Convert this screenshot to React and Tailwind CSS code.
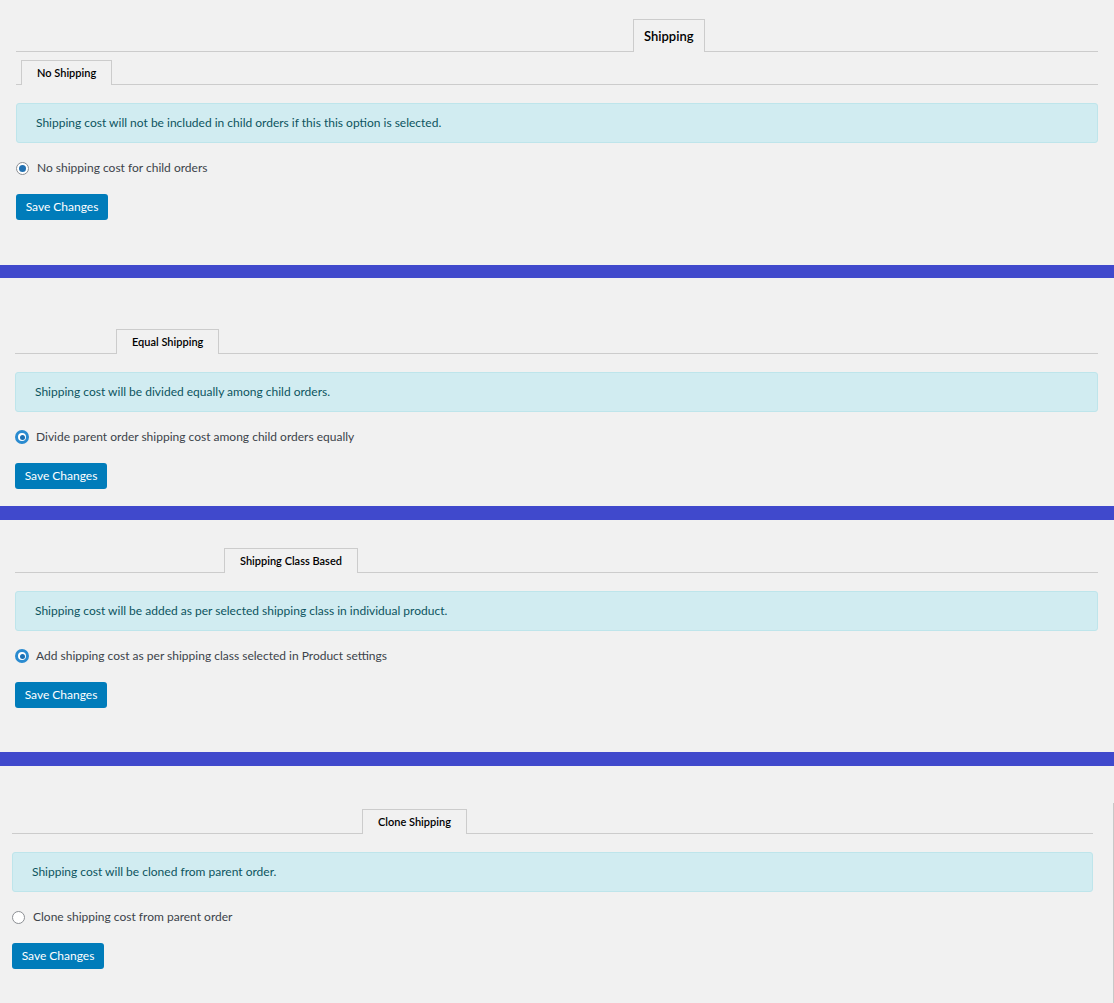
import React from "react";

function Radio({ variant }) {
  if (variant === "focus") {
    return (
      <span className="flex h-[14px] w-[14px] shrink-0 items-center justify-center rounded-full border-[3px] border-[#2a8bd0] bg-white">
        <span className="h-[5px] w-[5px] rounded-full bg-[#1a6fb3]" />
      </span>
    );
  }
  if (variant === "checked") {
    return (
      <span className="flex h-[13px] w-[13px] shrink-0 items-center justify-center rounded-full border border-[#8c8f94] bg-white">
        <span className="h-[7px] w-[7px] rounded-full bg-[#2271b1]" />
      </span>
    );
  }
  return <span className="h-[13px] w-[13px] shrink-0 rounded-full border border-[#8c8f94] bg-white" />;
}

function TabRow({ label, offset, big, top }) {
  return (
    <div className={`flex border-b border-[#ccc] ${top}`}>
      <div
        className={`${offset} -mb-px border border-b-0 border-[#ccc] bg-[#f1f1f1] text-black ${
          big ? "h-[33px] px-[10px] pt-[7px] text-[13px] font-semibold" : "h-[25px] px-[15px] pt-[4px] text-[11px] font-semibold"
        }`}
      >
        {label}
      </div>
    </div>
  );
}

function Body({ alert, radio, label, gap }) {
  return (
    <>
      <div className="mt-[18px] flex h-[40px] items-center rounded-[3px] border border-[#bee5eb] bg-[#d1ecf1] pl-[19px] text-[12px] text-[#0c5460]">
        {alert}
      </div>
      <div className={`mt-[16px] flex items-center ${gap} text-[12px] text-[#3c434a]`}>
        <Radio variant={radio} />
        <span>{label}</span>
      </div>
      <div className="mt-[16px]">
        <button className="h-[26px] w-[92px] rounded-[3px] bg-[#007cba] text-[12px] text-white">Save Changes</button>
      </div>
    </>
  );
}

function Bar({ h }) {
  return <div className={`${h} w-full bg-[#4049cc]`} />;
}

export default function App() {
  return (
    <div className="min-h-[1003px] w-[1114px] bg-[#f1f1f1]" style={{ fontFamily: '"Lato", "Noto Sans", sans-serif' }}>
      {/* Section 1 */}
      <div className="h-[265px] pl-[16px] pr-[16px] pt-[19px]">
        <TabRow label="Shipping" offset="ml-[617px]" big top="" />
        <TabRow label="No Shipping" offset="ml-[5px]" top="mt-[8px]" />
        <Body
          alert="Shipping cost will not be included in child orders if this this option is selected."
          radio="checked"
          label="No shipping cost for child orders"
          gap="gap-[8px]"
        />
      </div>
      <Bar h="h-[13px]" />
      {/* Section 2 */}
      <div className="h-[228px] pl-[15px] pr-[16px] pt-[51px]">
        <TabRow label="Equal Shipping" offset="ml-[101px]" top="" />
        <Body
          alert="Shipping cost will be divided equally among child orders."
          radio="focus"
          label="Divide parent order shipping cost among child orders equally"
          gap="gap-[7px]"
        />
      </div>
      <Bar h="h-[14px]" />
      {/* Section 3 */}
      <div className="h-[232px] pl-[15px] pr-[16px] pt-[28px]">
        <TabRow label="Shipping Class Based" offset="ml-[209px]" top="" />
        <Body
          alert="Shipping cost will be added as per selected shipping class in individual product."
          radio="focus"
          label="Add shipping cost as per shipping class selected in Product settings"
          gap="gap-[7px]"
        />
      </div>
      <Bar h="h-[14px]" />
      {/* Section 4 */}
      <div className="flex h-[237px]">
        <div className="flex-1 pl-[12px] pr-[20px] pt-[43px]">
          <TabRow label="Clone Shipping" offset="ml-[350px]" top="" />
          <Body
            alert="Shipping cost will be cloned from parent order."
            radio="empty"
            label="Clone shipping cost from parent order"
            gap="gap-[8px]"
          />
        </div>
        <div className="mt-[37px] w-px bg-[#c8c8c8]" />
      </div>
    </div>
  );
}
